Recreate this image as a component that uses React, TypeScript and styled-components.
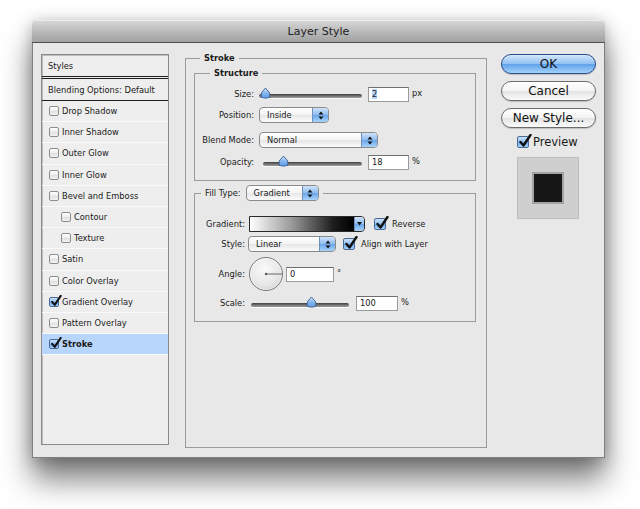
import React from "react";
import styled, { createGlobalStyle } from "styled-components";

const GlobalStyle = createGlobalStyle`
  html, body { margin: 0; padding: 0; background: #fff; }
  body { font-family: "DejaVu Sans", "Noto Sans", sans-serif; color: #1a1a1a; }
`;

const Page = styled.div`
  width: 640px;
  height: 509px;
  padding: 20px 0 0 32px;
  box-sizing: border-box;
  overflow: hidden;
`;

const Window = styled.div`
  width: 573px;
  height: 438px;
  box-sizing: border-box;
  border: 1px solid #7f7f7f;
  border-top: none;
  border-radius: 5px 5px 0 0;
  background: #e8e8e8;
  box-shadow: 0 22px 30px rgba(0, 0, 0, 0.5), 0 2px 16px rgba(0, 0, 0, 0.25);
  display: flex;
  flex-direction: column;
`;

const TitleBar = styled.div`
  height: 21px;
  padding-top: 1px;
  margin: 0 -1px;
  border-bottom: 1px solid #505050;
  border-radius: 5px 5px 0 0;
  background: linear-gradient(#d8d8d8, #b8b8b8 55%, #a2a2a2);
  box-shadow: inset 0 1px 0 #ececec;
  display: flex;
  align-items: center;
  justify-content: center;
  font-size: 11px;
  color: #222;
`;

const Body = styled.div`
  display: flex;
  align-items: flex-start;
  padding: 11px 8px 0 8px;
`;

/* ---------- styles list ---------- */

const List = styled.div`
  width: 128px;
  height: 391px;
  flex-shrink: 0;
  box-sizing: border-box;
  border: 1px solid #8a8a8a;
  box-shadow: inset 1px 1px 0 #bdbdbd;
  background: #eeeeee;
  margin-right: 16px;
  font-size: 8.3px;
`;

const ListHead = styled.div<{ $double?: boolean }>`
  height: 21px;
  display: flex;
  align-items: center;
  padding-left: 6px;
  border-bottom: ${(p) => (p.$double ? "3px double #1e1e1e" : "1px solid #1e1e1e")};
`;

const ListItem = styled.div<{ $indent?: boolean; $selected?: boolean }>`
  height: 20.2px;
  display: flex;
  align-items: center;
  gap: 3px;
  padding-left: ${(p) => (p.$indent ? 19 : 7)}px;
  border-bottom: 1px solid #f9f9f9;
  background: ${(p) => (p.$selected ? "#b8d6fb" : "transparent")};
  font-weight: ${(p) => (p.$selected ? "bold" : "normal")};
`;

/* ---------- checkbox ---------- */

const Box = styled.span<{ $size: number; $checked?: boolean }>`
  position: relative;
  flex-shrink: 0;
  width: ${(p) => p.$size}px;
  height: ${(p) => p.$size}px;
  box-sizing: border-box;
  border-radius: 2px;
  border: 1px solid ${(p) => (p.$checked ? "#4a6a9a" : "#8c8c8c")};
  background: ${(p) =>
    p.$checked
      ? "linear-gradient(#cfe3fa, #8dbcef 50%, #6aa6ea 51%, #a6d2fa)"
      : "linear-gradient(#ffffff, #ececec 50%, #dedede 51%, #f4f4f4)"};
  svg {
    position: absolute;
    left: 0;
    top: -3px;
  }
`;

const Checkbox: React.FC<{ size: number; checked?: boolean }> = ({ size, checked }) => (
  <Box $size={size} $checked={checked}>
    {checked && (
      <svg width={size + 2} height={size + 2} viewBox="0 0 14 14">
        <path d="M2.5 8 L5.5 11.5 L12.5 1" fill="none" stroke="#111" strokeWidth="2.4" strokeLinecap="round" strokeLinejoin="round" />
      </svg>
    )}
  </Box>
);

/* ---------- middle panel ---------- */

const Group = styled.fieldset<{ $h?: number }>`
  margin: 0;
  min-width: 0;
  border: 1px solid #9b9b9b;
  box-sizing: border-box;
  ${(p) => (p.$h ? `height: ${p.$h}px;` : "")}
`;

const Panel = styled(Group)`
  width: 302px;
  flex-shrink: 0;
  margin-top: -2px;
  padding: 3px 10px 0 8px;
`;

const SubGroup = styled(Group)<{ $mt?: number }>`
  padding: 0 0 10px 0;
  margin-top: ${(p) => p.$mt ?? 0}px;
`;

const Legend = styled.legend<{ $ml: number }>`
  margin-left: ${(p) => p.$ml}px;
  padding: 0 4px;
  font-size: 8.3px;
  font-weight: bold;
  line-height: 12px;
`;

const FillLegend = styled.legend`
  margin-left: 6px;
  padding: 0 4px;
  font-size: 8.3px;
  line-height: 16px;
  display: flex;
  align-items: center;
  gap: 5px;
`;

const Row = styled.div<{ $mt: number; $h?: number }>`
  display: flex;
  align-items: center;
  height: ${(p) => p.$h ?? 16}px;
  margin-top: ${(p) => p.$mt}px;
  font-size: 8.3px;
`;

const Label = styled.span<{ $w: number; $gap: number }>`
  width: ${(p) => p.$w}px;
  margin-right: ${(p) => p.$gap}px;
  text-align: right;
  flex-shrink: 0;
`;

const Unit = styled.span`
  margin-left: 3px;
  margin-top: -3px;
`;

const Input = styled.div<{ $w: number; $ml: number }>`
  width: ${(p) => p.$w}px;
  height: 15px;
  margin-left: ${(p) => p.$ml}px;
  box-sizing: border-box;
  border: 1px solid #9a9a9a;
  border-top-color: #6f6f6f;
  background: #fff;
  padding-left: 3px;
  display: flex;
  align-items: center;
  font-size: 8.3px;
`;

const Selected = styled.span`
  background: #b5d5ff;
`;

const SliderWrap = styled.div<{ $w: number; $ml?: number }>`
  position: relative;
  width: ${(p) => p.$w}px;
  margin-left: ${(p) => p.$ml ?? 0}px;
  height: 12px;
  display: flex;
  align-items: center;
`;

const Track = styled.div`
  flex: 1;
  height: 4px;
  margin-top: 3px;
  border-radius: 2px;
  background: linear-gradient(#3f3f3f, #7c7c7c 60%, #9c9c9c);
  box-shadow: 0 1px 0 #fafafa;
`;

const ThumbSpot = styled.div`
  position: absolute;
  top: -1px;
  width: 11px;
  height: 12px;
`;

const Slider: React.FC<{ w: number; at: number; ml?: number }> = ({ w, at, ml }) => (
  <SliderWrap $w={w} $ml={ml}>
    <Track />
    <ThumbSpot style={{ left: at - 5 }}>
      <svg width="11" height="12" viewBox="0 0 11 12">
        <defs>
          <linearGradient id="thumbFill" x1="0" y1="0" x2="0" y2="1">
            <stop offset="0" stopColor="#d9eafc" />
            <stop offset="0.5" stopColor="#84b6ee" />
            <stop offset="1" stopColor="#5d9ce4" />
          </linearGradient>
        </defs>
        <path
          d="M1.2 10.5 V7 Q1.2 5 3 4 L5.5 1 L8 4 Q9.8 5 9.8 7 V10.5 Q5.5 11.8 1.2 10.5 Z"
          fill="url(#thumbFill)"
          stroke="#3c5f92"
          strokeWidth="0.9"
        />
      </svg>
    </ThumbSpot>
  </SliderWrap>
);

const Popup = styled.div<{ $w: number }>`
  width: ${(p) => p.$w}px;
  height: 16px;
  box-sizing: border-box;
  border: 1px solid #8a8a8a;
  border-radius: 4px;
  background: linear-gradient(#ffffff, #f3f3f3 50%, #e6e6e6 51%, #fbfbfb);
  display: flex;
  align-items: center;
  overflow: hidden;
  font-size: 8.3px;
  span {
    flex: 1;
    padding-left: 7px;
  }
`;

const PopupCap = styled.div<{ $w?: number }>`
  width: ${(p) => p.$w ?? 15}px;
  align-self: stretch;
  border-left: 1px solid #6f8fbf;
  background: linear-gradient(#cfe3fa, #8dbcef 50%, #69a5e9 51%, #a8d3fa);
  display: flex;
  align-items: center;
  justify-content: center;
`;

const Arrows = () => (
  <svg width="6" height="9" viewBox="0 0 6 9">
    <path d="M3 0.5 L5.5 3.5 H0.5 Z M3 8.5 L5.5 5.5 H0.5 Z" fill="#111" />
  </svg>
);

const Select: React.FC<{ w: number; value: string }> = ({ w, value }) => (
  <Popup $w={w}>
    <span>{value}</span>
    <PopupCap>
      <Arrows />
    </PopupCap>
  </Popup>
);

const GradientBar = styled.div`
  width: 116px;
  height: 16px;
  box-sizing: border-box;
  border: 1px solid #2a2a2a;
  border-radius: 0 4px 4px 0;
  display: flex;
  overflow: hidden;
`;

const GradientFill = styled.div`
  flex: 1;
  background: linear-gradient(to right, #ffffff, #9a9a9a 40%, #1d1d1d 80%, #000);
`;

const Check = styled.label<{ $ml: number }>`
  display: flex;
  align-items: center;
  gap: 6px;
  margin-left: ${(p) => p.$ml}px;
`;

const Dial = () => (
  <svg width="36" height="36" viewBox="0 0 36 36">
    <defs>
      <radialGradient id="dialFill" cx="0.45" cy="0.35" r="0.7">
        <stop offset="0" stopColor="#fafafa" />
        <stop offset="0.7" stopColor="#e6e6e6" />
        <stop offset="1" stopColor="#cfcfcf" />
      </radialGradient>
    </defs>
    <circle cx="18" cy="18" r="16.5" fill="url(#dialFill)" stroke="#7a7a7a" strokeWidth="1" />
    <circle cx="18" cy="18" r="15.5" fill="none" stroke="#ffffff" strokeOpacity="0.6" strokeWidth="0.8" />
    <line x1="18" y1="18" x2="34" y2="18" stroke="#555" strokeWidth="0.9" />
    <circle cx="18" cy="18" r="1.2" fill="#555" />
  </svg>
);

/* ---------- right column ---------- */

const Side = styled.div`
  width: 95px;
  margin-left: 14px;
  display: flex;
  flex-direction: column;
  gap: 7px;
`;

const Button = styled.div<{ $primary?: boolean }>`
  height: 20px;
  box-sizing: border-box;
  border-radius: 10px;
  border: 1px solid ${(p) => (p.$primary ? "#2c4c8a" : "#6b6b6b")};
  background: ${(p) =>
    p.$primary
      ? "linear-gradient(#d4e7fc, #93c1f2 48%, #62a1ea 52%, #a2d2fc)"
      : "linear-gradient(#ffffff, #f4f4f4 48%, #e3e3e3 52%, #fbfbfb)"};
  box-shadow: 0 1px 1px rgba(0, 0, 0, 0.18);
  display: flex;
  align-items: center;
  justify-content: center;
  font-size: 12px;
  color: #111;
`;

const PreviewCheck = styled.div`
  display: flex;
  align-items: center;
  gap: 4px;
  margin: 1px 0 0 16px;
  height: 12px;
  font-size: 11.5px;
`;

const Swatch = styled.div`
  width: 62px;
  height: 62px;
  margin: 2px 0 0 16px;
  box-sizing: border-box;
  border: 1px solid #bcbcbc;
  background: #cfcfcf;
  display: flex;
  align-items: center;
  justify-content: center;
`;

const SwatchInner = styled.div`
  width: 28px;
  height: 28px;
  background: #161616;
  box-shadow: 0 0 0 2px #a2a2a2;
`;

const effects = [
  { name: "Drop Shadow" },
  { name: "Inner Shadow" },
  { name: "Outer Glow" },
  { name: "Inner Glow" },
  { name: "Bevel and Emboss" },
  { name: "Contour", indent: true },
  { name: "Texture", indent: true },
  { name: "Satin" },
  { name: "Color Overlay" },
  { name: "Gradient Overlay", checked: true },
  { name: "Pattern Overlay" },
  { name: "Stroke", checked: true, selected: true },
];

export default function App() {
  return (
    <Page>
      <GlobalStyle />
      <Window>
        <TitleBar>Layer Style</TitleBar>
        <Body>
          <List>
            <ListHead $double>Styles</ListHead>
            <ListHead>Blending Options: Default</ListHead>
            {effects.map((e) => (
              <ListItem key={e.name} $indent={e.indent} $selected={e.selected}>
                <Checkbox size={10} checked={e.checked} />
                {e.name}
              </ListItem>
            ))}
          </List>

          <Panel $h={396}>
            <Legend $ml={6}>Stroke</Legend>
            <SubGroup>
              <Legend $ml={15}>Structure</Legend>
              <Row $mt={7}>
                <Label $w={59} $gap={5}>Size:</Label>
                <Slider w={103} at={6} />
                <Input $w={41} $ml={6}>
                  <Selected>2</Selected>
                </Input>
                <Unit>px</Unit>
              </Row>
              <Row $mt={5}>
                <Label $w={59} $gap={5}>Position:</Label>
                <Select w={70} value="Inside" />
              </Row>
              <Row $mt={9}>
                <Label $w={59} $gap={5}>Blend Mode:</Label>
                <Select w={119} value="Normal" />
              </Row>
              <Row $mt={6}>
                <Label $w={59} $gap={5}>Opacity:</Label>
                <Slider w={99} at={20} ml={4} />
                <Input $w={41} $ml={6}>18</Input>
                <Unit>%</Unit>
              </Row>
            </SubGroup>

            <SubGroup $mt={4}>
              <FillLegend>
                Fill Type:
                <Select w={73} value="Gradient" />
              </FillLegend>
              <Row $mt={15}>
                <Label $w={50} $gap={4}>Gradient:</Label>
                <GradientBar>
                  <GradientFill />
                  <PopupCap $w={9}>
                    <svg width="5" height="4" viewBox="0 0 5 4">
                      <path d="M0 0 H5 L2.5 3.5 Z" fill="#111" />
                    </svg>
                  </PopupCap>
                </GradientBar>
                <Check $ml={9}>
                  <Checkbox size={12} checked />
                  Reverse
                </Check>
              </Row>
              <Row $mt={4}>
                <Label $w={50} $gap={3}>Style:</Label>
                <Select w={88} value="Linear" />
                <Check $ml={7}>
                  <Checkbox size={12} checked />
                  Align with Layer
                </Check>
              </Row>
              <Row $mt={4} $h={36}>
                <Label $w={50} $gap={3}>Angle:</Label>
                <Dial />
                <Input $w={48} $ml={2}>0</Input>
                <Unit>°</Unit>
              </Row>
              <Row $mt={3}>
                <Label $w={50} $gap={6}>Scale:</Label>
                <Slider w={98} at={60} />
                <Input $w={42} $ml={7}>100</Input>
                <Unit>%</Unit>
              </Row>
            </SubGroup>
          </Panel>

          <Side>
            <Button $primary>OK</Button>
            <Button>Cancel</Button>
            <Button>New Style...</Button>
            <PreviewCheck>
              <Checkbox size={12} checked />
              Preview
            </PreviewCheck>
            <Swatch>
              <SwatchInner />
            </Swatch>
          </Side>
        </Body>
      </Window>
    </Page>
  );
}
